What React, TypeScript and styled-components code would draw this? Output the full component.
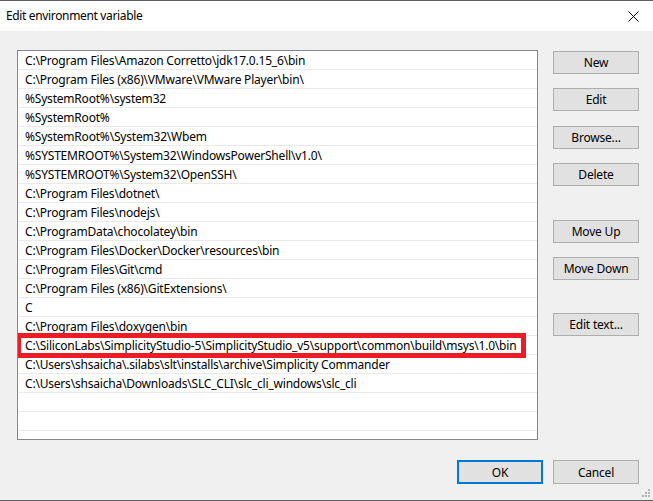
import React from "react";
import styled, { createGlobalStyle } from "styled-components";

const GlobalStyle = createGlobalStyle`
  html, body {
    margin: 0;
    padding: 0;
    background: #f0f0f0;
  }
  body {
    font-family: "Noto Sans", "Liberation Sans", sans-serif;
    font-size: 12px;
    letter-spacing: -0.2px;
    color: #000;
  }
`;

const PATHS = [
  "C:\\Program Files\\Amazon Corretto\\jdk17.0.15_6\\bin",
  "C:\\Program Files (x86)\\VMware\\VMware Player\\bin\\",
  "%SystemRoot%\\system32",
  "%SystemRoot%",
  "%SystemRoot%\\System32\\Wbem",
  "%SYSTEMROOT%\\System32\\WindowsPowerShell\\v1.0\\",
  "%SYSTEMROOT%\\System32\\OpenSSH\\",
  "C:\\Program Files\\dotnet\\",
  "C:\\Program Files\\nodejs\\",
  "C:\\ProgramData\\chocolatey\\bin",
  "C:\\Program Files\\Docker\\Docker\\resources\\bin",
  "C:\\Program Files\\Git\\cmd",
  "C:\\Program Files (x86)\\GitExtensions\\",
  "C",
  "C:\\Program Files\\doxygen\\bin",
  "C:\\SiliconLabs\\SimplicityStudio-5\\SimplicityStudio_v5\\support\\common\\build\\msys\\1.0\\bin",
  "C:\\Users\\shsaicha\\.silabs\\slt\\installs\\archive\\Simplicity Commander",
  "C:\\Users\\shsaicha\\Downloads\\SLC_CLI\\slc_cli_windows\\slc_cli",
  "",
  "",
  "",
];

const HIGHLIGHT = 15;

const SIDE_BUTTONS = [
  { label: "New", top: 1 },
  { label: "Edit", top: 14 },
  { label: "Browse...", top: 15 },
  { label: "Delete", top: 14 },
  { label: "Move Up", top: 34 },
  { label: "Move Down", top: 14 },
  { label: "Edit text...", top: 33 },
];

const Window = styled.div`
  width: 653px;
  height: 501px;
  box-sizing: border-box;
  border-top: 1px solid #5f5f5f;
  border-bottom: 1px solid #5f5f5f;
  background: #f0f0f0;
  display: flex;
  flex-direction: column;
  position: relative;
`;

const TitleBar = styled.div`
  height: 30px;
  background: #fff;
  display: flex;
  align-items: center;
  justify-content: space-between;
  padding: 0 10px 0 6px;
`;

const Title = styled.span`
  font-size: 12px;
  letter-spacing: -0.35px;
  color: #000;
  margin-top: -1px;
`;

const CloseButton = styled.div`
  width: 30px;
  height: 30px;
  display: flex;
  align-items: center;
  justify-content: center;
  margin-right: -10px;
  margin-left: auto;
  transform: translateX(-5px);
`;

const Body = styled.div`
  display: flex;
  align-items: flex-start;
  gap: 15px;
  padding: 19px 14px 0 17px;
`;

const ListBox = styled.div`
  width: 521px;
  height: 390px;
  box-sizing: border-box;
  border: 1px solid #828790;
  background: #fff;
  overflow: hidden;
  position: relative;
`;

const Row = styled.div`
  height: 17px;
  padding-top: 1px;
  line-height: 18px;
  border-bottom: 1px solid #eaeaea;
  padding-left: 7px;
  white-space: nowrap;
  position: relative;
`;

const HighlightWrap = styled.div`
  position: absolute;
  left: 0;
  right: 0;
  top: 0;
  bottom: 0;
`;

const Highlight = styled.div`
  position: absolute;
  left: -2px;
  right: 11px;
  top: -3px;
  bottom: -4px;
  border: 5px solid #ed1c24;
  pointer-events: none;
`;

const SideColumn = styled.div`
  display: flex;
  flex-direction: column;
  width: 86px;
`;

const Button = styled.div<{ $top?: number; $default?: boolean }>`
  box-sizing: border-box;
  height: 23px;
  margin-top: ${(p) => p.$top ?? 0}px;
  background: #e1e1e1;
  border: ${(p) => (p.$default ? "2px solid #0078d7" : "1px solid #adadad")};
  display: flex;
  align-items: center;
  justify-content: center;
  font-size: 12px;
  color: #000;
`;

const Footer = styled.div`
  display: flex;
  justify-content: flex-end;
  gap: 10px;
  padding: 20px 14px 0 0;
`;

const FooterButton = styled(Button)`
  width: 86px;
  height: 24px;
`;

const Grip = styled.svg`
  position: absolute;
  right: 2px;
  bottom: 2px;
`;

export default function App() {
  return (
    <>
      <GlobalStyle />
      <Window>
        <TitleBar>
          <Title>Edit environment variable</Title>
          <CloseButton>
            <svg width="11" height="11" viewBox="0 0 11 11">
              <path d="M0.5 0.5 L10.5 10.5 M10.5 0.5 L0.5 10.5" stroke="#000" strokeWidth="1" />
            </svg>
          </CloseButton>
        </TitleBar>
        <Body>
          <ListBox>
            {PATHS.map((p, i) => (
              <Row key={i}>
                {p}
                {i === HIGHLIGHT && (
                  <HighlightWrap>
                    <Highlight />
                  </HighlightWrap>
                )}
              </Row>
            ))}
          </ListBox>
          <SideColumn>
            {SIDE_BUTTONS.map((b) => (
              <Button key={b.label} $top={b.top}>
                {b.label}
              </Button>
            ))}
          </SideColumn>
        </Body>
        <Footer>
          <FooterButton $default>OK</FooterButton>
          <FooterButton>Cancel</FooterButton>
        </Footer>
        <Grip width="10" height="10" viewBox="0 0 10 10">
          {[
            [7, 1],
            [4, 4],
            [7, 4],
            [1, 7],
            [4, 7],
            [7, 7],
          ].map(([x, y]) => (
            <rect key={`${x}-${y}`} x={x} y={y} width="2" height="2" fill="#b4b4b4" />
          ))}
        </Grip>
      </Window>
    </>
  );
}
